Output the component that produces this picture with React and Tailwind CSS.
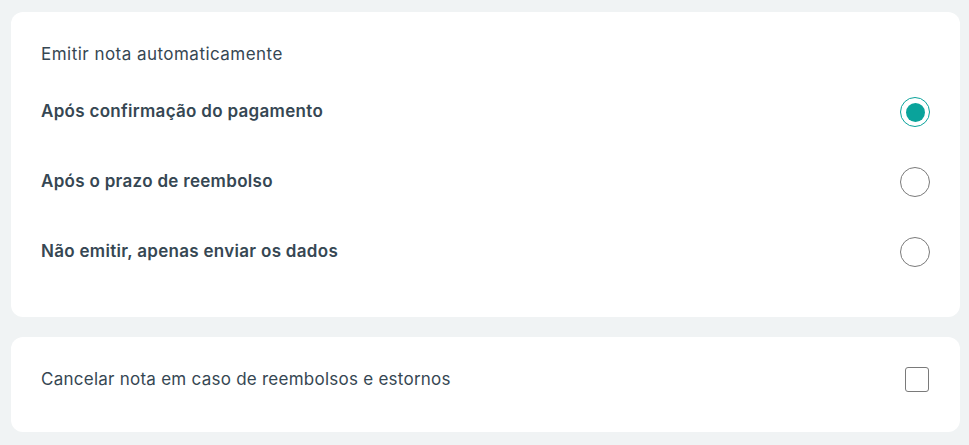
const options = [
  { id: 'pagamento', label: 'Após confirmação do pagamento' },
  { id: 'reembolso', label: 'Após o prazo de reembolso' },
  { id: 'nao-emitir', label: 'Não emitir, apenas enviar os dados' },
];

function Radio({ checked }) {
  if (checked) {
    return (
      <span className="flex h-[30px] w-[30px] items-center justify-center rounded-full border-[1.5px] border-[#0aa39b]">
        <span className="h-[19px] w-[19px] rounded-full bg-[#0aa39b]" />
      </span>
    );
  }
  return <span className="block h-[30px] w-[30px] rounded-full border-[1.5px] border-[#7a7a7a]" />;
}

export default function App() {
  const selected = 'pagamento';

  return (
    <div className="min-h-[445px] bg-[#f0f3f4] pt-3 font-['Inter',sans-serif] text-[17px] text-[#364753]">
      <div className="ml-[11px] w-[949px] rounded-xl bg-white px-[30px] pt-[30px] pb-[30px]">
        <div className="h-6 leading-6 tracking-[0.47px]">Emitir nota automaticamente</div>
        <div className="mt-[11px]">
          {options.map((opt) => (
            <div key={opt.id} className="flex h-[70px] items-center justify-between">
              <span className="font-semibold tracking-[0.3px]">{opt.label}</span>
              <Radio checked={opt.id === selected} />
            </div>
          ))}
        </div>
      </div>

      <div className="mt-5 ml-[11px] w-[949px] rounded-xl bg-white px-[30px] pt-[30px] pb-[40px]">
        <div className="flex h-[25px] items-center justify-between">
          <span className="tracking-[0.25px]">Cancelar nota em caso de reembolsos e estornos</span>
          <span className="mr-px block h-[25px] w-[24px] rounded-[3px] border-[1.5px] border-[#7a7a7a]" />
        </div>
      </div>
    </div>
  );
}
